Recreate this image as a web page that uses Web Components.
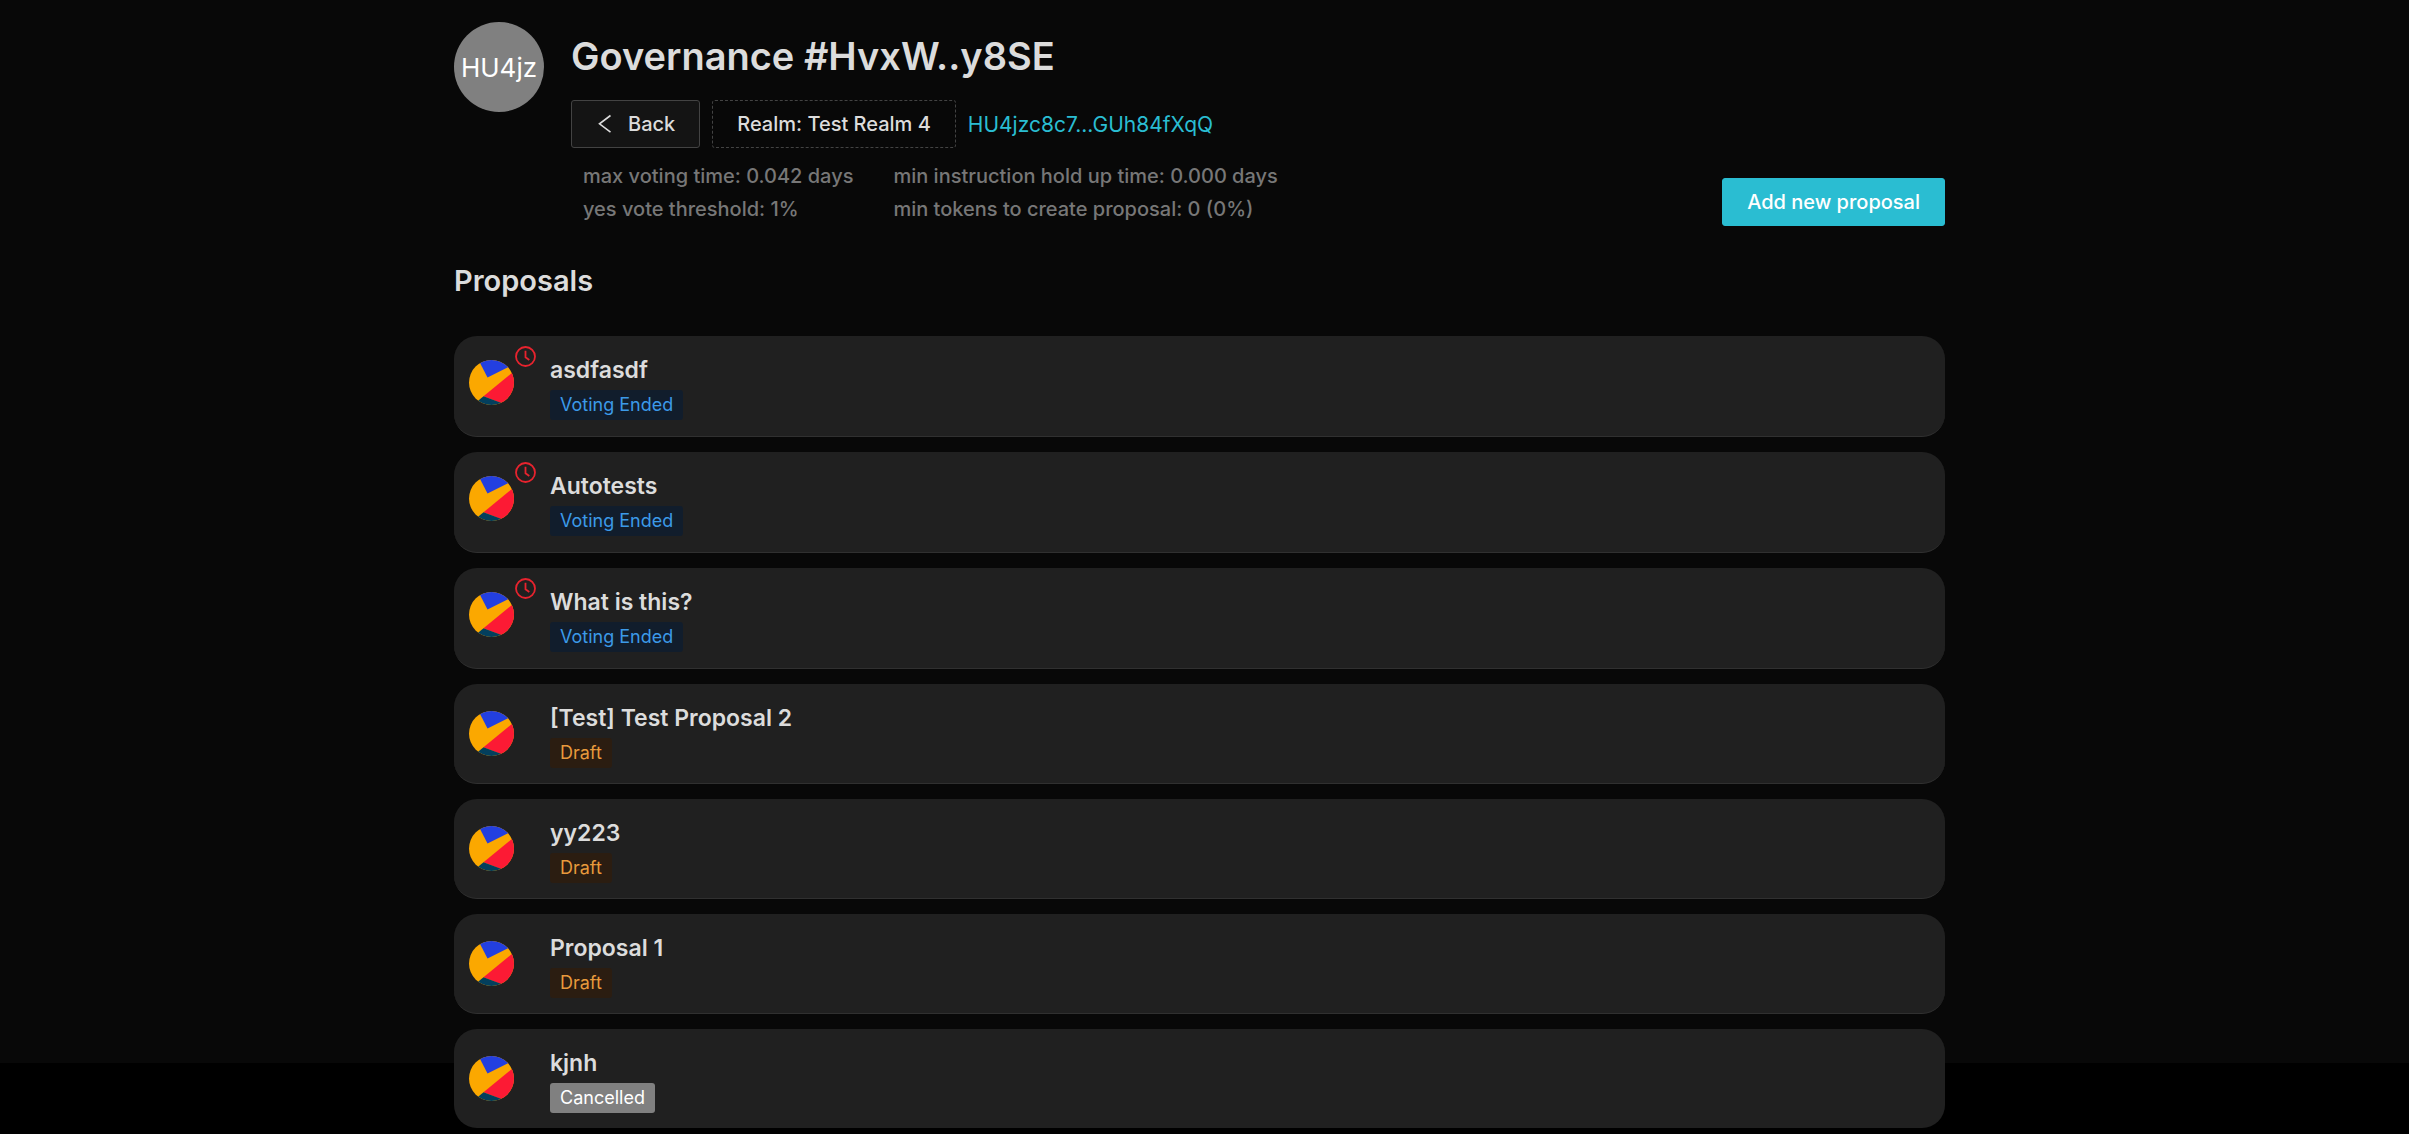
<!DOCTYPE html>
<html lang="en">
<head>
<meta charset="utf-8">
<meta name="viewport" content="width=device-width, initial-scale=1">
<title>Governance</title>
<style>
  :root {
    --text: #dcdcdc;
    --muted: #777;
    --primary: #2abdd2;
    --page: #080808;
    --card: #202020;
    --line: #303030;
  }
  html { background: #000; }
  body {
    margin: 0;
    color: var(--text);
    font: 500 20px/33px Inter, "Liberation Sans", sans-serif;
  }
</style>
</head>
<body>
<governance-page></governance-page>

<script>
const define = (name, html, setup) => {
  const template = document.createElement('template');
  template.innerHTML = html;
  customElements.define(name, class extends HTMLElement {
    constructor() {
      super();
      this.attachShadow({ mode: 'open' }).append(template.content.cloneNode(true));
    }
    connectedCallback() { if (setup) setup(this, this.shadowRoot); }
  });
};

define('round-avatar', `
  <style>
    :host {
      display: flex; align-items: center; justify-content: center; flex: none;
      width: 90px; height: 90px; border-radius: 50%;
      background: #808080; color: #fff; font-size: 26px; font-weight: 400;
    }
  </style>
  <slot></slot>`);

define('ui-button', `
  <style>
    :host { display: block; flex: none; }
    button {
      display: flex; align-items: center; gap: 11px;
      box-sizing: border-box; height: 48px; padding: 0 24px; margin: 0;
      font: inherit; color: var(--text); white-space: nowrap;
      background: #141414; border: 1px solid #434343; border-radius: 3px; cursor: pointer;
    }
    :host([kind="dashed"]) button { background: transparent; border-style: dashed; }
    :host([kind="primary"]) button { background: var(--primary); border-color: var(--primary); color: #fff; }
  </style>
  <button type="button"><slot></slot></button>`);

define('left-icon', `
  <style>:host { display: block; width: 21px; height: 21px; } svg { display: block; }</style>
  <svg width="21" height="21" viewBox="0 0 21 21" fill="none" stroke="currentColor" stroke-width="1.6" aria-hidden="true">
    <path d="M14.500 1.500 3.500 9.800 14.500 18.100"/>
  </svg>`);

define('identity-icon', `
  <style>:host { display: block; width: 45px; height: 45px; border-radius: 50%; overflow: hidden; } svg { display: block; }</style>
  <svg width="45" height="45" viewBox="0 0 45 45" aria-hidden="true">
    <rect width="45" height="45" fill="#fba800"/>
    <path d="M9.500 0 18.500 17.500 45 4.300V0Z" fill="#233fe0"/>
    <path d="M45 11.300 14.500 36.300 45 48Z" fill="#fc1a34"/>
    <path d="M14.500 36.300 4 45H38Z" fill="#033f5d"/>
    <path d="M39.300 7.200 42.500 10.500 45 9V4.300Z" fill="#fc1a34"/>
  </svg>`);

define('clock-icon', `
  <style>:host { display: block; width: 21px; height: 21px; color: #e8232e; } svg { display: block; }</style>
  <svg width="21" height="21" viewBox="0 0 21 21" fill="none" stroke="currentColor" stroke-width="1.800" aria-hidden="true">
    <circle cx="10.500" cy="10.500" r="9.500"/>
    <path d="M10.500 4.800V11.300L14.300 14"/>
  </svg>`);

define('status-tag', `
  <style>
    :host {
      display: block; width: max-content; box-sizing: border-box; height: 30px; padding: 0 10px;
      font-size: 18px; line-height: 30px; font-weight: 400; border-radius: 3px;
      background: #808080; color: #fff;
    }
    :host([kind="ended"]) { background: #111d2c; color: #3c9ae8; }
    :host([kind="draft"]) { background: #2b1d11; color: #e89a3c; }
  </style>
  <slot></slot>`);

define('proposal-card', `
  <style>
    :host {
      display: flex; align-items: center; box-sizing: border-box; padding: 15px;
      min-height: 100px; background: var(--card); border-bottom: 1px solid var(--line); border-radius: 23px;
    }
    :host([expired]) { min-height: 101px; align-items: flex-start; }
    :host(:last-of-type) { border-bottom: 0; min-height: 99px; }
    .icon { position: relative; width: 81px; flex: none; }
    :host([expired]) .icon { margin-top: 9px; }
    clock-icon { display: none; position: absolute; left: 46px; top: -14px; }
    :host([expired]) clock-icon { display: block; }
    h4 { margin: 0 0 1px; font-size: 23px; line-height: 38px; font-weight: 600; }
  </style>
  <div class="icon"><identity-icon></identity-icon><clock-icon></clock-icon></div>
  <div><h4></h4><status-tag><slot></slot></status-tag></div>`,
  (el, root) => {
    root.querySelector('h4').textContent = el.getAttribute('name');
    root.querySelector('status-tag').setAttribute('kind', el.getAttribute('kind'));
  });

define('governance-header', `
  <style>
    :host { display: flex; align-items: flex-start; gap: 27px; padding-top: 22px; }
    .body { flex: 1; min-width: 0; }
    h1 { margin: 3px 0 12px; font-size: 38px; line-height: 63px; font-weight: 600; }
    .actions { display: flex; align-items: center; gap: 12px; }
    a { color: var(--primary); font-size: 21px; font-weight: 400; text-decoration: none; }
    .details { display: flex; align-items: flex-end; justify-content: space-between; margin-top: 12px; }
    .facts { display: flex; gap: 40px; padding-left: 12px; color: var(--muted); }
  </style>
  <round-avatar>HU4jz</round-avatar>
  <div class="body">
    <h1>Governance #HvxW..y8SE</h1>
    <div class="actions">
      <ui-button><left-icon></left-icon>Back</ui-button>
      <ui-button kind="dashed">Realm: Test Realm 4</ui-button>
      <a href="#account">HU4jzc8c7...GUh84fXqQ</a>
    </div>
    <div class="details">
      <div class="facts">
        <div><div>max voting time: 0.042 days</div><div>yes vote threshold: 1%</div></div>
        <div><div>min instruction hold up time: 0.000 days</div><div>min tokens to create proposal: 0 (0%)</div></div>
      </div>
      <ui-button kind="primary">Add new proposal</ui-button>
    </div>
  </div>`);

define('governance-page', `
  <style>
    :host {
      display: block; padding: 0 10px 6px 0;
      background: linear-gradient(var(--page), var(--page)) no-repeat 0 0 / 100% 1063px;
    }
    main { max-width: 1491px; margin: 0 auto; }
    h2 { margin: 31px 0; font-size: 29px; line-height: 48px; font-weight: 600; }
    .list { display: flex; flex-direction: column; gap: 15px; }
  </style>
  <main>
    <governance-header></governance-header>
    <h2>Proposals</h2>
    <div class="list">
      <proposal-card name="asdfasdf" kind="ended" expired>Voting Ended</proposal-card>
      <proposal-card name="Autotests" kind="ended" expired>Voting Ended</proposal-card>
      <proposal-card name="What is this?" kind="ended" expired>Voting Ended</proposal-card>
      <proposal-card name="[Test] Test Proposal 2" kind="draft">Draft</proposal-card>
      <proposal-card name="yy223" kind="draft">Draft</proposal-card>
      <proposal-card name="Proposal 1" kind="draft">Draft</proposal-card>
      <proposal-card name="kjnh" kind="cancelled">Cancelled</proposal-card>
    </div>
  </main>`);
</script>
</body>
</html>
